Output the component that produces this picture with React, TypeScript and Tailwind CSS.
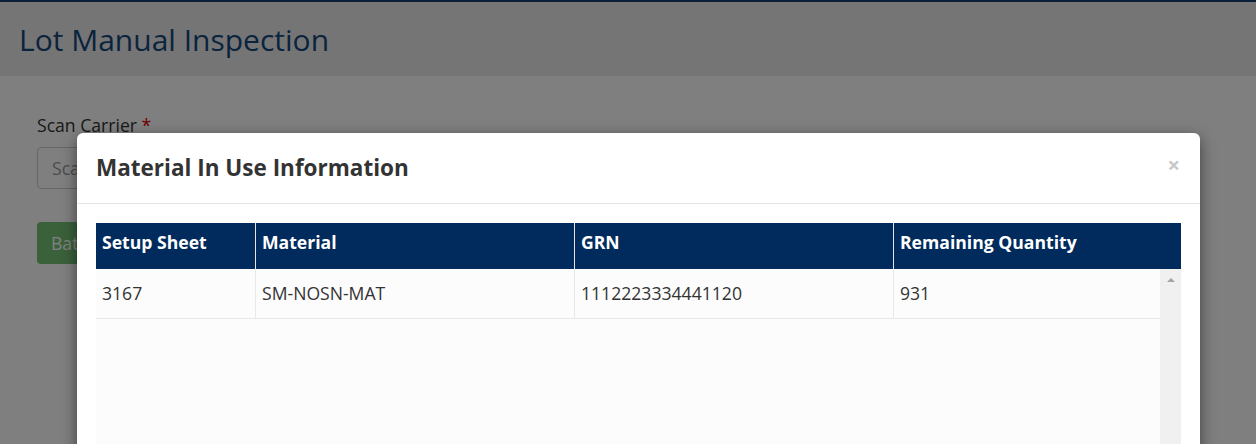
const columnas = [
  { titulo: "Setup Sheet", ancho: "w-[160px]" },
  { titulo: "Material", ancho: "w-[319px]" },
  { titulo: "GRN", ancho: "w-[319px]" },
  { titulo: "Remaining Quantity", ancho: "flex-1" },
];

const fila = ["3167", "SM-NOSN-MAT", "1112223334441120", "931"];

export default function App() {
  return (
    <div className="relative h-[444px] w-[1256px] overflow-hidden bg-white font-['Open_Sans',sans-serif]">
      {/* Página de fondo */}
      <div className="h-[76px] border-t-2 border-[#123f70] bg-[#ebebeb] px-[19px] pt-[18px]">
        <h1 className="text-[30px] leading-[40px] text-[#16487c]">
          Lot Manual Inspection
        </h1>
      </div>

      <div className="px-[37px] pt-[38px]">
        <label className="text-[17.6px] leading-[22px] text-[#333]">
          Scan Carrier <span className="text-[#e00000]">*</span>
        </label>
        <div className="mt-[9px] flex h-[42px] w-[420px] items-center rounded-[4px] border border-[#ccc] px-[14px] text-[17.6px] text-[#999]">
          Scan Carrier
        </div>
        <button className="mt-[33px] flex h-[42px] items-center rounded-[4px] bg-[#74c274] px-[14px] text-[17.6px] text-white">
          Batch
        </button>
      </div>

      {/* Capa oscura */}
      <div className="absolute inset-0 bg-black/50" />

      {/* Modal */}
      <div className="absolute left-[77px] top-[133px] h-[340px] w-[1123px] rounded-[6px] bg-white shadow-[0_5px_15px_rgba(0,0,0,0.5)]">
        <div className="flex h-[71px] items-center justify-between border-b border-[#e5e5e5] pl-[19px] pr-[20px]">
          <h4 className="text-[22.5px] font-bold text-[#333]">
            Material In Use Information
          </h4>
          <span className="-mt-[8px] text-[22px] font-bold leading-none text-[#c8c8c8]">
            ×
          </span>
        </div>

        <div className="px-[19px] pt-[19px]">
          <div className="flex h-[46px] bg-[#002b5c]">
            {columnas.map((c, i) => (
              <div
                key={c.titulo}
                className={`${c.ancho} flex items-center px-[6px] pb-[8px] text-[17.6px] font-bold text-white ${
                  i < columnas.length - 1 ? "border-r border-[#e5e5e5]" : ""
                }`}
              >
                {c.titulo}
              </div>
            ))}
          </div>

          <div className="flex h-[200px] bg-[#fcfcfc]">
            <div className="flex-1">
              <div className="flex h-[50px] border-b border-[#e8e8e8]">
                {fila.map((v, i) => (
                  <div
                    key={v}
                    className={`${columnas[i].ancho} flex items-center px-[6px] text-[17.6px] text-[#333] ${
                      i < fila.length - 1 ? "border-r border-[#e8e8e8]" : ""
                    }`}
                  >
                    {v}
                  </div>
                ))}
              </div>
            </div>
            <div className="flex w-[21px] justify-center bg-[#f0f0f0] pt-[9px]">
              <div className="h-0 w-0 border-x-[4px] border-b-[4px] border-x-transparent border-b-[#a3a3a3]" />
            </div>
          </div>
        </div>
      </div>
    </div>
  );
}
